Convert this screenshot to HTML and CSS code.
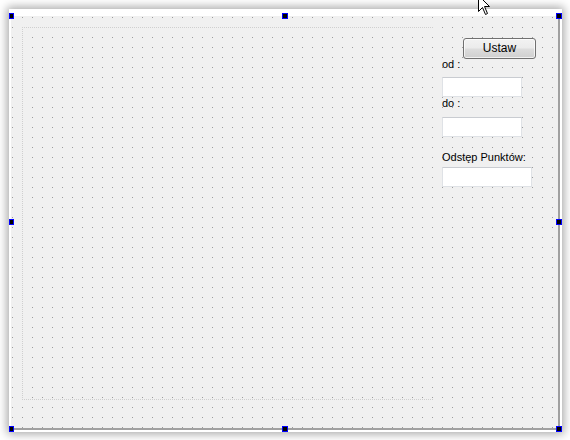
FILE: index.html
```html
<!DOCTYPE html>
<html lang="pl">
<head>
<meta charset="utf-8">
<title>Form</title>
<link rel="stylesheet" href="styles.css">
</head>
<body>
<div class="shell">
  <div class="form">
    <div class="layout-box"></div>
    <div class="panel">
      <button class="btn">Ustaw</button>
      <label class="lbl lbl-od">od :</label>
      <input class="edit edit-od" type="text">
      <label class="lbl lbl-do">do :</label>
      <input class="edit edit-do" type="text">
      <label class="lbl lbl-step">Odstęp Punktów:</label>
      <input class="edit edit-step" type="text">
    </div>
  </div>
  <span class="handle h-tl"></span>
  <span class="handle h-tm"></span>
  <span class="handle h-tr"></span>
  <span class="handle h-ml"></span>
  <span class="handle h-mr"></span>
  <span class="handle h-bl"></span>
  <span class="handle h-bm"></span>
  <span class="handle h-br"></span>
</div>
<svg class="cursor" width="14" height="22" viewBox="0 0 14 22">
  <path d="M0.5 0.5 L0.5 16.5 L4.5 12.5 L7.5 19.5 L9.5 18.5 L6.5 11.5 L11.5 11.5 Z" fill="#fff" stroke="#000" stroke-width="1"/>
</svg>
</body>
</html>
```
FILE: styles.css
```css
html, body {
  margin: 0;
  padding: 0;
}
body {
  width: 570px;
  height: 440px;
  background: #fff;
  position: relative;
  overflow: hidden;
  font-family: "Liberation Sans", Arial, sans-serif;
  font-size: 11px;
  color: #000;
}
.shell {
  position: relative;
  margin: 9px 0 0 9px;
  width: 553px;
  height: 423px;
  background: #fff;
  box-shadow: 0 0 9px 2px rgba(0, 0, 0, 0.35);
  padding: 7px 0 0 2px;
  box-sizing: border-box;
}
.form {
  position: relative;
  width: 549px;
  height: 414px;
  box-sizing: border-box;
  border-right: 2px solid #a0a0a0;
  border-bottom: 2px solid #a0a0a0;
  background-color: #f0f0f0;
  background-image: conic-gradient(at 1px 1px, transparent 0 270deg, #9c9c9c 270deg 360deg);
  background-size: 10px 10px;
  background-position: 1px 1px;
  display: flex;
  justify-content: flex-end;
}
.layout-box {
  position: absolute;
  left: 11px;
  top: 11px;
  width: 410px;
  height: 371px;
  border-top: 1px dotted #cfcfcf;
  border-left: 1px dotted #cfcfcf;
  border-bottom: 1px dotted #cfcfcf;
}
.panel {
  width: 116px;
  padding-top: 22px;
  display: flex;
  flex-direction: column;
  align-items: flex-start;
}
.btn {
  margin: 0 0 0 21px;
  width: 73px;
  height: 21px;
  padding: 0;
  border: 1px solid #707070;
  border-radius: 3px;
  background: linear-gradient(#f2f2f2 0%, #ebebeb 48%, #dddddd 52%, #cfcfcf 100%);
  box-shadow: inset 0 0 0 1px rgba(255, 255, 255, 0.7);
  font-family: "Liberation Sans", Arial, sans-serif;
  font-size: 12px;
  color: #000;
  line-height: 17px;
}
.lbl {
  display: block;
  line-height: 10px;
  height: 10px;
  white-space: nowrap;
}
.lbl-od { margin-top: 0; }
.lbl-do { margin-top: 1px; }
.lbl-step { margin-top: 15px; }
.edit {
  display: block;
  box-sizing: border-box;
  height: 20px;
  width: 80px;
  margin: 9px 0 0 0;
  padding: 0;
  border: 1px solid #dfe2e6;
  border-top-color: #c9ccd1;
  background: #fff;
}
.edit-od { margin-top: 8px; }
.edit-step {
  width: 90px;
  margin-top: 5px;
}
.handle {
  position: absolute;
  width: 6px;
  height: 6px;
  box-sizing: border-box;
  border: 1px solid #0000ff;
  background: #000;
}
.h-tl { left: 0; top: 4px; width: 5px; }
.h-tm { left: 273px; top: 4px; }
.h-tr { left: 547px; top: 4px; }
.h-ml { left: 0; top: 210px; width: 5px; }
.h-mr { left: 547px; top: 210px; }
.h-bl { left: 0; top: 417px; width: 5px; }
.h-bm { left: 273px; top: 417px; }
.h-br { left: 547px; top: 417px; }
.cursor {
  position: absolute;
  left: 478px;
  top: -5px;
}
```
